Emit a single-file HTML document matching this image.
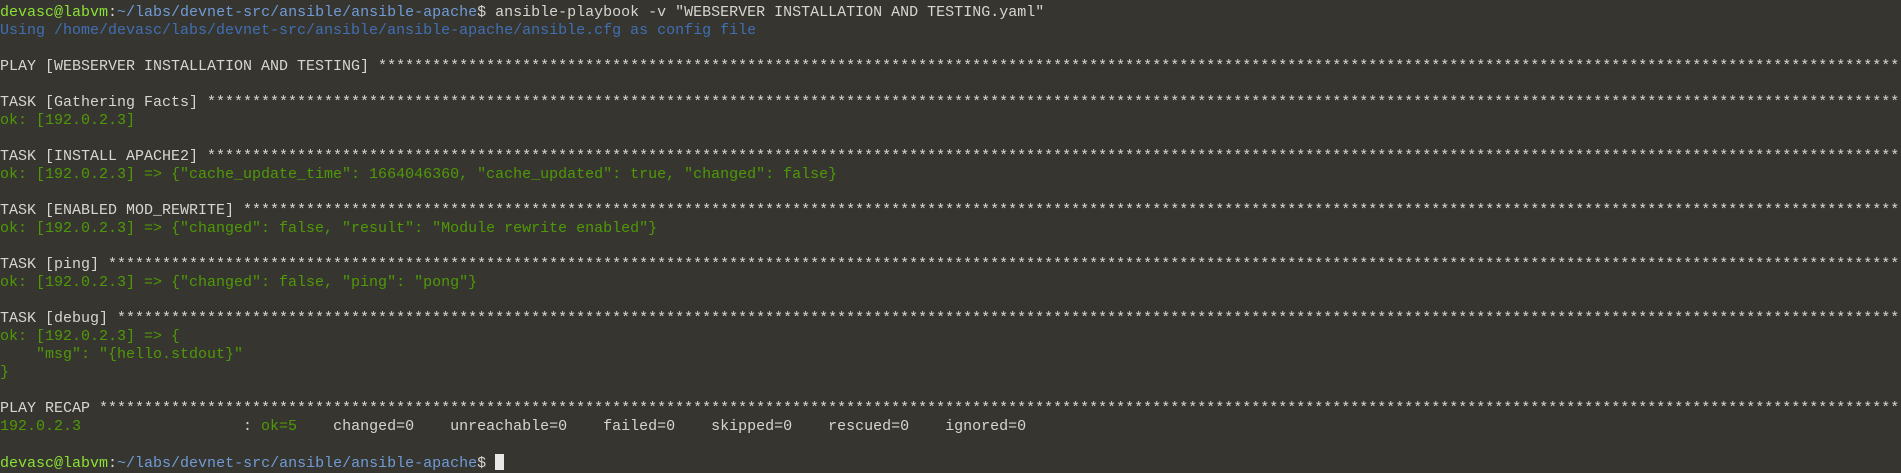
<!DOCTYPE html>
<html><head><meta charset="utf-8"><style>
html,body{margin:0;padding:0;background:#373530;width:1901px;height:473px;overflow:hidden}
pre{margin:0;padding:4px 0 0 0;font-family:"Liberation Mono",monospace;font-size:15px;line-height:18px;color:#d6d6d0;white-space:pre;overflow:hidden;width:1901px}
.g{color:#8ae234}.b{color:#6f9bd6}.u{color:#3f6fb3}.o{color:#4e9a06}
.c{display:inline-block;width:9px;height:16px;background:#e8e8e6;vertical-align:-3px}
</style></head><body><pre><span class="g">devasc@labvm</span>:<span class="b">~/labs/devnet-src/ansible/ansible-apache</span>$ ansible-playbook -v "WEBSERVER INSTALLATION AND TESTING.yaml"
<span class="u">Using /home/devasc/labs/devnet-src/ansible/ansible-apache/ansible.cfg as config file</span>

PLAY [WEBSERVER INSTALLATION AND TESTING] **********************************************************************************************************************************************************************************************

TASK [Gathering Facts] *****************************************************************************************************************************************************************************************************************
<span class="o">ok: [192.0.2.3]</span>

TASK [INSTALL APACHE2] *****************************************************************************************************************************************************************************************************************
<span class="o">ok: [192.0.2.3] =&gt; {"cache_update_time": 1664046360, "cache_updated": true, "changed": false}</span>

TASK [ENABLED MOD_REWRITE] *************************************************************************************************************************************************************************************************************
<span class="o">ok: [192.0.2.3] =&gt; {"changed": false, "result": "Module rewrite enabled"}</span>

TASK [ping] ****************************************************************************************************************************************************************************************************************************
<span class="o">ok: [192.0.2.3] =&gt; {"changed": false, "ping": "pong"}</span>

TASK [debug] ***************************************************************************************************************************************************************************************************************************
<span class="o">ok: [192.0.2.3] =&gt; {
    "msg": "{hello.stdout}"
}</span>

PLAY RECAP *****************************************************************************************************************************************************************************************************************************
<span class="o">192.0.2.3</span>                  : <span class="o">ok=5</span>    changed=0    unreachable=0    failed=0    skipped=0    rescued=0    ignored=0   

<span class="g">devasc@labvm</span>:<span class="b">~/labs/devnet-src/ansible/ansible-apache</span>$ <span class="c"></span></pre></body></html>
